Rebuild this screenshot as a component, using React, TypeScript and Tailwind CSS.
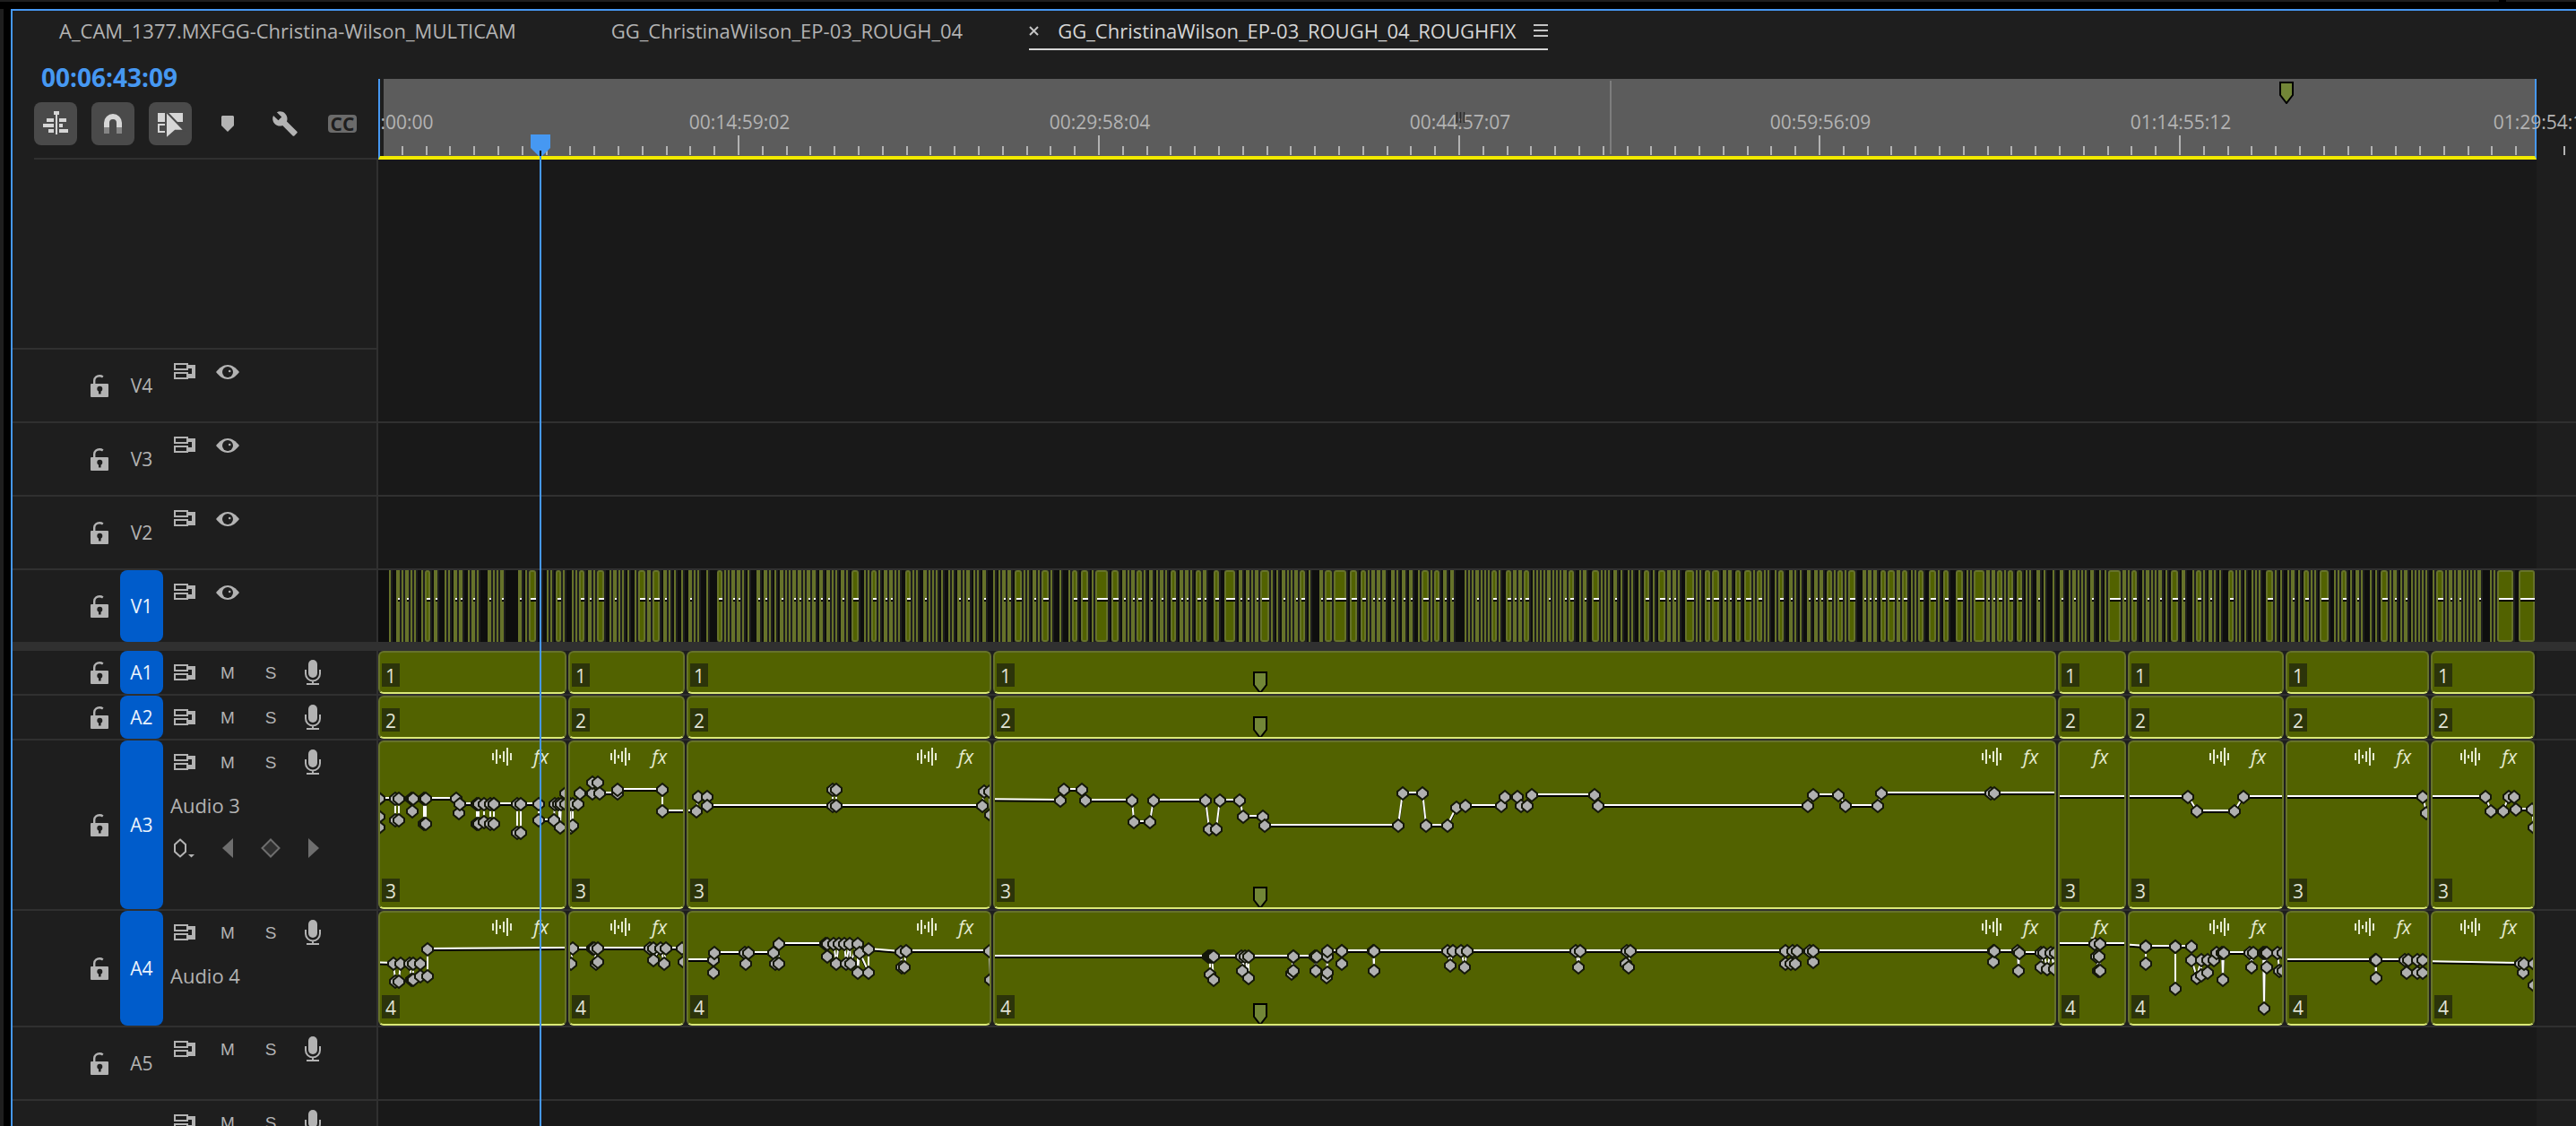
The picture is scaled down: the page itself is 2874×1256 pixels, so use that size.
import type { ReactNode } from 'react'
import { MdBuild } from 'react-icons/md'

type Point = [number, number]

interface ClipData {
  start: number
  width: number
  wave: boolean
  marker?: boolean
}

interface TrackProps {
  name: string
  targeted?: boolean
  size: string
  label?: string
  keyframes?: boolean
  children?: ReactNode
}

const LANE = 2408

const clips: ClipData[] = [
  { start: 0, width: 210, wave: true },
  { start: 212, width: 130, wave: true },
  { start: 344, width: 340, wave: true },
  { start: 686, width: 1186, wave: true, marker: true },
  { start: 1874, width: 76, wave: false },
  { start: 1952, width: 174, wave: true },
  { start: 2128, width: 160, wave: true },
  { start: 2290, width: 116, wave: true },
]

// "start:width" for every cut on V1, two pixels wide when no width is given
const v1Cuts = `12 20:4 26 30:4 36 40 48 52:6 62:4 74 78 84:4 90:4 100 104:4 110 122:4 128 132 136:4
156:4 164 168:8 180 188 192 198:6 206 216 220 224:6 234:4 240 244:8 258 262:4 268 272 278 286 290:8
300:4 306:8 318:4 324 330 338 346:4 352 356 366 378:6 386 390 394:4 400:4 406 412 422:4 430:4 436 442
448:4 454 458 462:4 468:4 474 478:4 484:4 492:4 500:4 506 510 516:4 522 528:8 542 546 550:6 558 564:4
570:4 576 580 588:6 596 600 608:4 614 618 622 628 636 640 646:4 652 656:4 664 668 674:4 686 692 696:4
702:4 710:8 720 724 730:4 736 740:8 750 760 770 774:6 784:8 796 800:14 818:8 830:4 836 840:4 846:6 854
860:4 868 872:4 878 884:6 894:4 900:4 906 912:6 920:4 932:6 944:12 960:4 968:4 974 978:4 984:10 996
1002 1008:4 1014 1018 1022:4 1028:6 1038 1050:4 1056:8 1066:14 1084:8 1096:6 1104 1108:4 1114:4 1120:4
1130:4 1136 1142:4 1150:4 1160 1164:8 1174 1178:6 1188:4 1196:4 1212 1216 1220 1224:4 1230 1234 1238
1242:6 1250 1258:6 1266:4 1272:4 1278:6 1288 1292 1296 1300 1304:4 1310 1314 1318 1322:4 1328:6 1340
1344:4 1354:8 1364 1368 1372 1378:4 1386 1394 1398 1406 1412:6 1422 1428:8 1438:4 1444:4 1450 1458:10
1470 1474 1480:6 1488:8 1500:4 1506:4 1514:6 1524:8 1534 1538:6 1546 1550 1558 1562:6 1574:4 1580 1586
1594:4 1602:4 1608:4 1616:6 1624 1628:6 1636 1640:8 1656:4 1662:4 1668:4 1676:6 1684:8 1694:4 1700:6
1710 1714 1718:6 1730:8 1740 1746:6 1760:8 1772 1776 1780:12 1794:4 1800:4 1806:6 1814 1818:6 1828:6
1838 1842 1850:4 1858 1868 1876:4 1886 1890:4 1896 1900 1904 1910:4 1920 1926 1930:14 1946:4 1952
1956:6 1968 1972:4 1978 1982 1986:4 1994 2000:8 2012:4 2024 2028:6 2036 2042:4 2048 2054:2 2064:6 2072
2076 2082 2090 2094 2098 2106:8 2116 2122 2130 2134:4 2142 2148:6 2156 2160 2166:10 2182 2186 2190:6
2200 2206:4 2212 2222 2228 2234:8 2244 2248:4 2256 2260:4 2268 2272 2276 2280 2284 2292 2296:8 2306
2310:4 2316 2320:4 2326 2330 2334 2338 2342:4 2356 2360 2364:18 2388:18`
  .split(/\s+/)
  .map((cut) => {
    const [x, w] = cut.split(':')
    return { x: Number(x), w: w ? Number(w) : 2 }
  })

// One volume line per clip, in lane pixels
const audio3: Point[][] = [
  [
    [1, 65], [1, 85], [1, 97], [1, 65], [19, 65], [19, 89], [23, 89], [23, 65], [37, 65], [38, 79], [39, 65],
    [51, 65], [51, 93], [53, 93], [53, 65], [87, 65], [90, 81], [91, 71], [110, 71], [110, 93], [112, 93], [112, 71],
    [118, 71], [118, 91], [125, 93], [125, 71], [129, 71], [129, 93], [129, 71], [155, 71], [155, 103], [159, 103],
    [159, 71], [179, 71], [179, 89], [196, 89], [197, 71], [201, 71], [203, 97], [204, 71], [209, 59], [209, 71],
  ],
  [
    [214, 71], [215, 97], [217, 95], [217, 71], [223, 71], [225, 59], [239, 59], [239, 47], [245, 47], [247, 59],
    [267, 59], [267, 55], [317, 55], [317, 79], [352, 79],
  ],
  [
    [334, 79], [355, 79], [357, 63], [367, 63], [367, 73], [507, 73], [507, 55], [511, 55], [511, 73], [674, 73],
    [676, 57], [682, 57], [683, 83],
  ],
  [
    [676, 66], [761, 67], [765, 55], [785, 55], [789, 67], [841, 67], [843, 91], [861, 91], [865, 67], [923, 67],
    [927, 99], [935, 99], [939, 67], [961, 67], [965, 85], [987, 85], [989, 95], [1138, 95], [1143, 59], [1165, 59],
    [1169, 95], [1193, 95], [1203, 75], [1213, 73], [1253, 73], [1257, 63], [1271, 63], [1275, 73], [1282, 73],
    [1287, 61], [1357, 61], [1361, 73], [1595, 73], [1601, 61], [1629, 61], [1637, 73], [1673, 73], [1677, 59],
    [1799, 59], [1803, 59], [1882, 59],
  ],
  [[1864, 63], [1960, 63]],
  [[1942, 63], [2019, 63], [2029, 79], [2071, 79], [2081, 63], [2136, 63]],
  [[2118, 63], [2281, 63], [2285, 81]],
  [
    [2280, 63], [2351, 63], [2357, 79], [2371, 79], [2377, 63], [2383, 63], [2385, 77], [2403, 77], [2405, 97],
  ],
]

const audio4: Point[][] = [
  [
    [-10, 58], [17, 59], [19, 79], [23, 79], [25, 59], [35, 59], [37, 77], [39, 77], [39, 59], [47, 59], [47, 73],
    [55, 73], [55, 43], [220, 42],
  ],
  [
    [215, 59], [217, 42], [239, 42], [241, 42], [243, 59], [245, 57], [245, 42], [303, 42], [307, 42], [307, 55],
    [315, 42], [319, 59], [321, 42], [339, 42], [341, 57],
  ],
  [
    [334, 55], [374, 55], [374, 69], [375, 47], [409, 47], [410, 59], [413, 47], [441, 47], [443, 59], [447, 59],
    [447, 37], [499, 37], [501, 51], [501, 37], [508, 37], [511, 59], [514, 37], [520, 37], [522, 59], [526, 37],
    [527, 59], [535, 37], [535, 69], [537, 47], [547, 69], [547, 43], [583, 46], [584, 63], [587, 63], [589, 45],
    [682, 45], [683, 77],
  ],
  [
    [676, 51], [926, 51], [928, 51], [928, 71], [932, 77], [930, 51], [932, 51], [963, 51], [964, 67], [967, 51],
    [971, 75], [971, 51], [1021, 51], [1019, 70], [1021, 67], [1021, 51], [1045, 51], [1046, 67], [1047, 51],
    [1059, 51], [1058, 74], [1059, 69], [1059, 45], [1075, 45], [1075, 59], [1075, 45], [1110, 45], [1111, 67],
    [1111, 45], [1193, 45], [1196, 61], [1199, 45], [1208, 45], [1212, 63], [1215, 45], [1336, 45], [1339, 63],
    [1341, 45], [1393, 45], [1392, 59], [1395, 63], [1397, 45], [1570, 45], [1570, 59], [1576, 59], [1578, 45],
    [1581, 59], [1583, 45], [1597, 45], [1601, 57], [1601, 45], [1802, 45], [1802, 57], [1803, 45], [1829, 45],
    [1830, 67], [1831, 47], [1855, 47], [1855, 63], [1858, 47], [1862, 65], [1866, 47], [1870, 65], [1871, 47],
  ],
  [[1864, 37], [1915, 37], [1917, 51], [1919, 67], [1921, 67], [1920, 51], [1921, 37], [1960, 37]],
  [
    [1942, 38], [1972, 40], [1972, 59], [1972, 40], [2005, 40], [2005, 87], [2005, 40], [2023, 40], [2023, 55],
    [2029, 75], [2034, 55], [2034, 72], [2041, 69], [2041, 55], [2048, 55], [2051, 47], [2057, 47], [2058, 77],
    [2059, 47], [2088, 47], [2090, 63], [2092, 47], [2103, 47], [2104, 109], [2105, 47], [2107, 63], [2107, 47],
    [2119, 47], [2121, 67], [2125, 67], [2125, 47],
  ],
  [
    [2118, 55], [2228, 55], [2229, 75], [2229, 55], [2261, 55], [2263, 69], [2265, 55], [2275, 55], [2275, 69],
    [2281, 69], [2281, 55],
  ],
  [[2280, 57], [2390, 59], [2393, 69], [2394, 59], [2405, 59], [2405, 83]],
]

const tabs = [
  { name: 'A_CAM_1377.MXFGG-Christina-Wilson_MULTICAM', active: false },
  { name: 'GG_ChristinaWilson_EP-03_ROUGH_04', active: false },
  { name: 'GG_ChristinaWilson_EP-03_ROUGH_04_ROUGHFIX', active: true },
]

// The first label has scrolled half out of view
const timecodes = [
  { code: ':00:00', at: 32 },
  { code: '00:14:59:02', at: 403 },
  { code: '00:29:58:04', at: 805 },
  { code: '00:44:57:07', at: 1207 },
  { code: '00:59:56:09', at: 1609 },
  { code: '01:14:55:12', at: 2011 },
  { code: '01:29:54:15', at: 2416 },
]

function LockIcon() {
  return (
    <svg width="20" height="25" viewBox="0 0 20 25" fill="none">
      <path d="M4.2 11V6.5C4.2 3 7 1.3 10 1.3c1.6 0 2.9.5 3.8 1.2" stroke="#b3b3b3" strokeWidth="2.4" />
      <rect y="10" width="20" height="15" rx="1" fill="#b3b3b3" />
      <circle cx="10.3" cy="15.7" r="3" fill="#1e1e1e" />
      <path d="M9 16h2.6v5.5H9z" fill="#1e1e1e" />
    </svg>
  )
}

function PatchIcon() {
  return (
    <svg width="24" height="18" viewBox="0 0 24 18" fill="none">
      <path d="M1 1h14v6H1zM1 11h14v6H1z" stroke="#b3b3b3" strokeWidth="2" />
      <path d="M15 2h9v15h-8v-5h4V6h-5z" fill="#b3b3b3" />
    </svg>
  )
}

function EyeIcon() {
  return (
    <svg width="26" height="18" viewBox="0 0 26 18">
      <path d="M0 10C4 5 8 2 13 2s9 3 13 8c-4 5-8 8-13 8S4 15 0 10z" fill="#b3b3b3" />
      <circle cx="13" cy="10" r="6" fill="#1e1e1e" />
      <circle cx="15.2" cy="9" r="1.3" fill="#b3b3b3" />
    </svg>
  )
}

function MicIcon() {
  return (
    <svg width="20" height="28" viewBox="0 0 20 28" fill="none">
      <rect x="4" width="10" height="20" rx="5" fill="#b3b3b3" />
      <path d="M1 11v4.5a8 8 0 0 0 16 0V11M9 23.5V27M2 27h14" stroke="#b3b3b3" strokeWidth="2" />
    </svg>
  )
}

function WaveIcon() {
  return (
    <svg width="22" height="20" viewBox="0 0 22 20">
      <path
        d="M0 6h2v8H0zM4 2h2v16H4zM8 8h2v4H8zM12 4h2v12h-2zM16 0h2v20h-2zM20 6h2v8h-2z"
        fill="#e6ebd0"
      />
    </svg>
  )
}

function MarkerIcon() {
  return (
    <svg width="16" height="25" viewBox="0 0 16 25">
      <path d="M1 1h14v14l-7 9-7-9z" fill="#728637" stroke="#000" strokeWidth="2" />
    </svg>
  )
}

function ToolButton({ label, on, children }: { label: string; on?: boolean; children: ReactNode }) {
  return (
    <button
      type="button"
      aria-label={label}
      className={
        on
          ? 'flex size-12 items-center justify-center rounded-lg bg-[#4a4a4a]'
          : 'flex size-12 items-center justify-center rounded-lg'
      }
    >
      {children}
    </button>
  )
}

function Cell({ label, children }: { label: string; children: ReactNode }) {
  return (
    <button type="button" aria-label={label} className="flex size-12 shrink-0 items-center justify-center">
      {children}
    </button>
  )
}

function SequenceTabs() {
  return (
    <nav className="flex h-11 shrink-0 gap-[74px] pl-5">
      {tabs.map((tab) => (
        <div
          key={tab.name}
          className={
            tab.active
              ? 'flex items-center border-b-2 border-[#d6d6d6] pt-0.5 text-[#d6d6d6]'
              : 'flex items-center border-b-2 border-transparent pt-0.5 text-[#b3b3b3]'
          }
        >
          <span className="w-8 shrink-0">
            {tab.active && (
              <button type="button" aria-label="Close sequence" className="block">
                <svg width="11" height="11" viewBox="0 0 11 11" stroke="#c4c4c4" strokeWidth="2">
                  <path d="M1 1l9 9M10 1l-9 9" />
                </svg>
              </button>
            )}
          </span>
          <button type="button" className="text-[22px] whitespace-nowrap">
            {tab.name}
          </button>
          {tab.active && (
            <button type="button" aria-label="Panel menu" className="ml-5">
              <svg width="16" height="14" viewBox="0 0 16 14" fill="#c4c4c4">
                <path d="M0 0h16v2H0zM0 6h16v2H0zM0 12h16v2H0z" />
              </svg>
            </button>
          )}
        </div>
      ))}
    </nav>
  )
}

function Toolbar() {
  return (
    <div className="flex w-[408px] shrink-0 flex-col">
      <p className="mt-3 ml-8 h-[46px] text-[28px] leading-9 font-bold text-[#4698f2]">00:06:43:09</p>
      <div className="ml-6 flex gap-4">
        <ToolButton label="Insert as nest" on>
          <svg width="48" height="48" viewBox="0 0 48 48" fill="#d6d6d6">
            <path d="M22 10h6v4h-2v22h-2V14h-2z" />
            <path d="M14 18h8v4h-8zM28 18h8v4h-8zM10 24h12v4H10zM28 24h4v4h-4zM16 30h6v4h-6zM28 30h10v4H28z" />
          </svg>
        </ToolButton>
        <ToolButton label="Snap" on>
          <svg width="48" height="48" viewBox="0 0 48 48" fill="none">
            <path d="M17 28v-5a7 7 0 0 1 14 0v5" stroke="#d6d6d6" strokeWidth="6" />
            <path d="M14 28h6v7h-6zM28 28h6v7h-6z" fill="#858585" />
          </svg>
        </ToolButton>
        <ToolButton label="Linked selection" on>
          <svg width="48" height="48" viewBox="0 0 48 48" fill="#d6d6d6">
            <path d="M10 12h8v10h-8zM22 12h16v10H22z" />
            <path d="M18 25h-7v8h7" fill="none" stroke="#d6d6d6" strokeWidth="2" />
            <path d="M19 10l21 21.8H29.5L19 41z" stroke="#4a4a4a" strokeWidth="2" />
          </svg>
        </ToolButton>
        <ToolButton label="Add marker">
          <svg width="14" height="18" viewBox="0 0 14 18" fill="#b3b3b3">
            <path d="M1 0h12l1 1v10l-7 7-7-7V1z" />
          </svg>
        </ToolButton>
        <ToolButton label="Timeline display settings">
          <MdBuild size={30} color="#b3b3b3" />
        </ToolButton>
        <ToolButton label="Captions">
          <span className="flex h-5 w-8 items-center justify-center rounded bg-[#6b6b6b] text-[21px] leading-5 font-bold text-[#1e1e1e]">
            CC
          </span>
        </ToolButton>
      </div>
      <div className="mt-[14px] ml-6 h-0.5 bg-[#303030]" />
    </div>
  )
}

function Ruler() {
  const ticks = Array.from({ length: 91 }, (_, i) => i + 1).filter((i) => i !== 90)

  return (
    <div className="relative mt-8 h-[90px] flex-1 overflow-hidden">
      <div className="mr-11 h-full border-x-2 border-x-[#4698f2] border-b-4 border-b-[#f2ea00] pl-1">
        <div className="h-full bg-[#5c5c5c]" />
      </div>
      <svg className="absolute inset-0 h-full w-full" viewBox="0 0 2452 90" preserveAspectRatio="none">
        <path d="M1375 2v82" stroke="#7d7d7d" strokeWidth="2" />
        {ticks.map((i) => {
          const x = Math.round(i * 26.8)
          return <path key={i} d={i % 15 === 0 ? `M${x} 63v22` : `M${x} 75v10`} stroke="#b3b3b3" strokeWidth="2" />
        })}
      </svg>
      {timecodes.map(({ code, at }) => (
        <span
          key={code}
          className="absolute top-9 -translate-x-1/2 text-[21px] leading-6 text-[#b3b3b3]"
          style={{ left: `${(at / 2452) * 100}%` }}
        >
          {code}
        </span>
      ))}
      <svg className="absolute inset-0 h-full w-full" viewBox="0 0 2452 90" preserveAspectRatio="none">
        <path d="M1203.5 37v12M1207.5 37v12M1211.5 37v12" stroke="#2b2b2b" strokeWidth="1.5" />
      </svg>
      <span className="absolute top-[3px] left-[86.5%]">
        <MarkerIcon />
      </span>
    </div>
  )
}

function Track({ name, targeted, size, label, keyframes, children }: TrackProps) {
  const video = name.startsWith('V')

  return (
    <div className={`flex shrink-0 ${size}`}>
      <div className="flex w-[408px] shrink-0 border-r-2 border-[#303030]">
        <button type="button" aria-label={`Lock ${name}`} className="ml-[74px] flex w-[46px] items-center justify-center">
          <LockIcon />
        </button>
        <button
          type="button"
          className={
            targeted
              ? 'w-12 rounded-lg bg-[#005ccb] pt-0.5 text-[21px] font-medium text-[#ebf3fc]'
              : 'w-12 pt-0.5 text-[21px] text-[#b3b3b3]'
          }
        >
          {name}
        </button>
        <div>
          <div className="flex">
            <Cell label={`Sync lock ${name}`}>
              <PatchIcon />
            </Cell>
            {video && (
              <Cell label={`Toggle output ${name}`}>
                <EyeIcon />
              </Cell>
            )}
            {!video && (
              <>
                <button type="button" className="size-12 pt-0.5 font-['Liberation_Sans'] text-[19px] text-[#b3b3b3]">
                  M
                </button>
                <button type="button" className="size-12 pt-0.5 font-['Liberation_Sans'] text-[19px] text-[#b3b3b3]">
                  S
                </button>
                <Cell label={`Voice-over ${name}`}>
                  <MicIcon />
                </Cell>
              </>
            )}
          </div>
          {label && <p className="h-12 pl-2 text-[22px] leading-[48px] text-[#b3b3b3]">{label}</p>}
          {keyframes && (
            <div className="flex">
              <Cell label="Show keyframes">
                <svg width="26" height="22" viewBox="0 0 26 22" fill="none">
                  <path d="M8 1.5l6 5.5v8l-6 5.5L2 15V7z" stroke="#b3b3b3" strokeWidth="2" />
                  <path d="M17 18h7l-3.5 3.5z" fill="#b3b3b3" />
                </svg>
              </Cell>
              <Cell label="Previous keyframe">
                <svg width="12" height="22" viewBox="0 0 12 22" fill="#6e6e6e">
                  <path d="M12 0v22L0 11z" />
                </svg>
              </Cell>
              <Cell label="Add keyframe">
                <svg width="22" height="22" viewBox="0 0 22 22" fill="#303030">
                  <path d="M11 1.5l9.5 9.5-9.5 9.5L1.5 11z" stroke="#6e6e6e" strokeWidth="2" />
                </svg>
              </Cell>
              <Cell label="Next keyframe">
                <svg width="12" height="22" viewBox="0 0 12 22" fill="#6e6e6e">
                  <path d="M0 0v22l12-11z" />
                </svg>
              </Cell>
            </div>
          )}
        </div>
      </div>
      <div className="min-w-0 flex-1 pr-11">
        <div className="h-full bg-[#191919]">{children}</div>
      </div>
    </div>
  )
}

function VideoCuts() {
  return (
    <svg className="block h-full w-full bg-[#0e0e0e]" viewBox={`0 0 ${LANE} 80`} preserveAspectRatio="none">
      {v1Cuts.map(({ x, w }) => (
        <g key={x}>
          <rect x={x} width={w + 2} height="80" fill="#1e1e1e" />
          <rect x={x} width={w} height="80" rx={w > 4 ? 3 : 0} fill="#66722a" />
          {w > 4 && <rect x={x + 2} y="2" width={w - 4} height="76" rx="1" fill="#526200" />}
          {w > 2 && <rect x={x + 2} y="31" width={w - 2} height="2" fill="#fff" />}
          {w > 2 && <rect x={x + 2} y="33" width={w - 2} height="2" fill="#000" />}
        </g>
      ))}
    </svg>
  )
}

function VolumeLine({ clip, height, points }: { clip: ClipData; height: number; points: Point[] }) {
  const line = points.map(([x, y]) => `${x},${y}`).join(' ')
  const end = clip.start + clip.width

  return (
    <svg
      className="absolute -inset-x-0.5 -top-0.5 h-[calc(100%+4px)] w-[calc(100%+4px)]"
      viewBox={`${clip.start} 0 ${clip.width} ${height}`}
      preserveAspectRatio="none"
      fill="none"
    >
      <polyline points={line} stroke="#000" strokeWidth="2" transform="translate(0 1)" />
      <polyline points={line} stroke="#fff" strokeWidth="2" transform="translate(0 -1)" />
      {points
        .filter(([x]) => x >= clip.start && x <= end)
        .map(([x, y], i) => (
          <path
            key={i}
            d={`M${x} ${y - 7}l6 5v4l-6 5l-6-5v-4z`}
            fill="#b0b0b0"
            stroke="#15180a"
            strokeWidth="2"
          />
        ))}
    </svg>
  )
}

function AudioClips({ channel, height, lines }: { channel: number; height: number; lines?: Point[][] }) {
  return (
    <div className="mr-0.5 grid h-full grid-cols-[210fr_130fr_340fr_1186fr_76fr_174fr_160fr_116fr] gap-0.5 bg-[#1e1e1e]">
      {clips.map((clip, i) => (
        <div
          key={clip.start}
          className="relative min-w-0 overflow-hidden rounded-md border-2 border-[#66722a] border-b-[#dbe978] bg-[#526200]"
        >
          {lines && <VolumeLine clip={clip} height={height} points={lines[i]} />}
          {lines && (
            <div className="absolute top-1.5 right-[18px] flex items-start gap-6">
              {clip.wave && <WaveIcon />}
              <span className="text-[21px] leading-5 text-[#e6ebd0] italic">fx</span>
            </div>
          )}
          <span className="absolute bottom-1.5 left-0.5 h-[26px] w-5 bg-[#2c340a] text-center text-[21px] leading-7 font-medium text-[#e0e3d4]">
            {channel}
          </span>
          {clip.marker && (
            <span className="absolute -bottom-0.5 left-[288px]">
              <MarkerIcon />
            </span>
          )}
        </div>
      ))}
    </div>
  )
}

function Playhead() {
  return (
    <div className="pointer-events-none absolute top-[94px] bottom-0 left-[578px] flex w-[22px] flex-col items-center">
      <svg className="shrink-0" width="22" height="24" viewBox="0 0 22 24">
        <path d="M0 0h22v15l-9 9H9l-9-9z" fill="#4698f2" />
        <path d="M10 18h2v6h-2z" fill="#000" />
      </svg>
      <div className="w-0.5 flex-1 bg-[#4698f2]" />
    </div>
  )
}

export default function App() {
  return (
    <div className="flex h-screen flex-col overflow-hidden bg-black font-['Open_Sans','Noto_Sans',sans-serif] text-[#b3b3b3]">
      <div className="mb-2 flex h-0.5 shrink-0 gap-2">
        <div className="flex-1 bg-[#1e1e1e]" />
        <div className="w-[78px] bg-[#1e1e1e]" />
      </div>
      <div className="flex min-h-0 flex-1">
        <div className="mr-2 w-1 bg-[#1e1e1e]" />
        <main className="flex min-w-0 flex-1 flex-col border-t-2 border-l-2 border-[#4698f2] bg-[#1e1e1e]">
          <SequenceTabs />
          <div className="relative flex min-h-0 flex-1 flex-col overflow-hidden">
            <div className="flex shrink-0">
              <Toolbar />
              <Ruler />
            </div>
            <div className="flex h-[212px] shrink-0">
              <div className="w-[408px] border-r-2 border-b-2 border-[#303030]" />
              <div className="mr-11 flex-1 bg-[#191919]" />
            </div>
            <Track name="V4" size="h-[82px] border-b-2 border-[#303030]" />
            <Track name="V3" size="h-[82px] border-b-2 border-[#303030]" />
            <Track name="V2" size="h-[82px] border-b-2 border-[#303030]" />
            <Track name="V1" size="h-20" targeted>
              <VideoCuts />
            </Track>
            <div className="h-[10px] shrink-0 bg-[#303030]" />
            <Track name="A1" size="h-[50px] border-b-2 border-[#303030]" targeted>
              <AudioClips channel={1} height={48} />
            </Track>
            <Track name="A2" size="h-[50px] border-b-2 border-[#303030]" targeted>
              <AudioClips channel={2} height={48} />
            </Track>
            <Track name="A3" size="h-[190px] border-b-2 border-[#303030]" targeted label="Audio 3" keyframes>
              <AudioClips channel={3} height={188} lines={audio3} />
            </Track>
            <Track name="A4" size="h-[130px] border-b-2 border-[#303030]" targeted label="Audio 4">
              <AudioClips channel={4} height={128} lines={audio4} />
            </Track>
            <Track name="A5" size="h-[82px] border-b-2 border-[#303030]" />
            <Track name="A6" size="h-[82px] border-b-2 border-[#303030]" />
            <Playhead />
          </div>
        </main>
      </div>
    </div>
  )
}
